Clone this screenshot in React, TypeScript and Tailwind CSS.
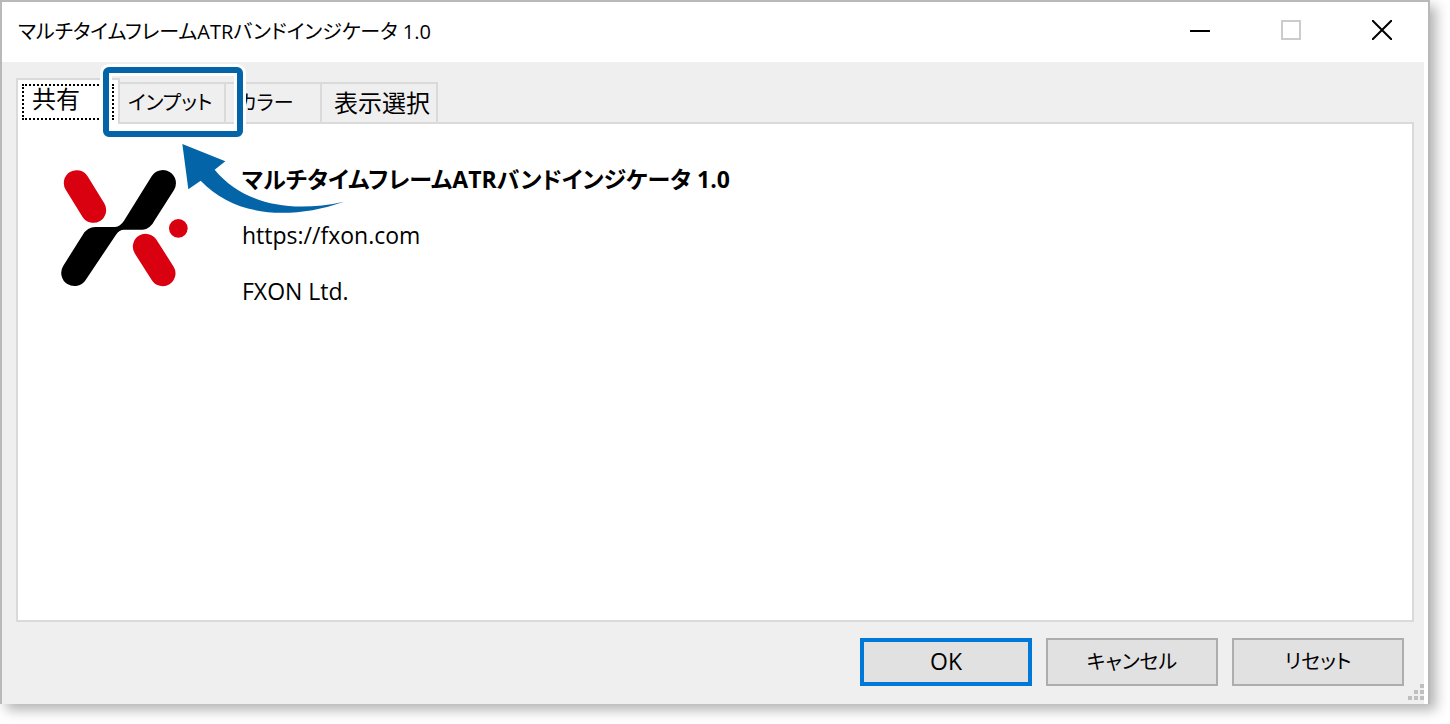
import type { ReactNode } from "react";

const APP_NAME = "マルチタイムフレームATRバンドインジケータ 1.0";

const Logo = () => (
  <svg viewBox="60 114 384 360" className="w-32 h-30 shrink-0" aria-hidden="true">
    <g stroke="#d9000f" strokeWidth="77" strokeLinecap="round">
      <path d="M110 159 L160 240" />
      <path d="M317 350 L368 430" />
    </g>
    <circle cx="415" cy="295" r="28" fill="#d9000f" />
    <path d="M335 139 A39 39 0 0 1 402 180 L346 268 Q330 299 308 299 L252 299 Q238 299 228 314 L137 450 A39 39 0 0 1 70 407 L128 315 Q142 291 166 291 L226 291 Q240 290 252 272 Z" />
  </svg>
);

const Callout = () => (
  <>
    <span className="absolute z-10 -left-[17px] -top-[15px] w-35 h-[70px] rounded-md border-6 border-[#0464a8] shadow-[0_0_0_3px_white,inset_0_0_0_3px_white] pointer-events-none" />
    <svg
      viewBox="426 42 486 207"
      className="absolute z-10 left-[62px] top-[62px] w-[162px] h-[69px] pointer-events-none"
      aria-hidden="true"
    >
      <path
        fill="#0464a8"
        d="M427 42 L556 94 L524 119 C600 210 730 255 912 215 C740 275 580 255 482 152 L445 178 Z"
      />
    </svg>
  </>
);

const TitleBar = () => (
  <header className="flex items-start justify-between h-15 bg-white pl-4 pr-9">
    <h1 className="text-xl leading-15">{APP_NAME}</h1>
    <div className="flex items-center gap-[71px] pt-[18px]">
      <button type="button" aria-label="最小化" className="block">
        <svg viewBox="0 0 20 20" className="size-5" shapeRendering="crispEdges">
          <path d="M0 11 H20" stroke="#000" strokeWidth="2" />
        </svg>
      </button>
      <button type="button" aria-label="最大化" disabled className="block">
        <svg viewBox="0 0 20 20" className="size-5" fill="none">
          <path d="M1 1 H19 V19 H1 Z" stroke="#ccc" strokeWidth="2" />
        </svg>
      </button>
      <button type="button" aria-label="閉じる" className="block">
        <svg viewBox="0 0 20 20" className="size-5">
          <path d="M0 0 L20 20 M20 0 L0 20" stroke="#000" strokeWidth="2" />
        </svg>
      </button>
    </div>
  </header>
);

const Tab = ({ className, children }: { className: string; children: ReactNode }) => (
  <button
    type="button"
    role="tab"
    aria-selected="false"
    className={`h-10 border-t-2 border-r-2 border-[#dadada] bg-[#efefef] text-left leading-9 ${className}`}
  >
    {children}
  </button>
);

const DialogButton = ({ className, children }: { className: string; children: ReactNode }) => (
  <button
    type="button"
    className={`w-43 h-12 bg-[#e1e1e1] leading-8 ${className}`}
  >
    {children}
  </button>
);

const App = () => {
  return (
    <div className="h-screen bg-white pr-5 pb-5 text-black font-['Open_Sans','Noto_Sans_CJK_JP',sans-serif] [font-feature-settings:'palt']">
      <div className="flex flex-col h-full border-2 border-b-0 border-[#b9b9b9] bg-white shadow-[6px_6px_12px_rgba(0,0,0,0.3)]">
        <TitleBar />
        <main className="relative flex flex-col flex-1 mr-1 bg-[#efefef] pt-4 pl-[14px] pr-[10px] pb-[18px]">
          <div role="tablist" className="flex items-end">
            <button
              type="button"
              role="tab"
              aria-selected="true"
              className="relative z-[1] w-26 h-[46px] -mb-[2px] border-2 border-b-0 border-[#dadada] bg-white p-1 text-left text-2xl"
            >
              <span className="block h-9 border-2 border-dotted border-black pl-2 leading-[26px]">
                共有
              </span>
            </button>
            <div className="relative">
              <Tab className="w-[106px] pl-2 text-xl">インプット</Tab>
              <Callout />
            </div>
            <Tab className="w-24 pl-3 text-xl">カラー</Tab>
            <Tab className="w-29 pl-3 text-2xl">表示選択</Tab>
          </div>

          <section
            role="tabpanel"
            className="flex flex-1 items-start gap-[54px] border-2 border-[#dadada] bg-white pl-[42px] pt-[27px]"
          >
            <div className="pt-[17px]">
              <Logo />
            </div>
            <div className="text-[23px] leading-14">
              <h2 className="font-bold">{APP_NAME}</h2>
              <p>
                <a href="https://fxon.com">https://fxon.com</a>
              </p>
              <p>FXON Ltd.</p>
            </div>
          </section>

          <div className="flex justify-end gap-[14px] pt-4 pr-[10px]">
            <DialogButton className="border-4 border-[#0078d7] pb-[2px] text-[23px]">OK</DialogButton>
            <DialogButton className="border-2 border-[#adadad] text-xl">キャンセル</DialogButton>
            <DialogButton className="border-2 border-[#adadad] text-xl">リセット</DialogButton>
          </div>

          <svg
            viewBox="0 0 16 16"
            className="absolute right-0 bottom-1 size-4"
            fill="#bfbfbf"
            aria-hidden="true"
          >
            <path d="M12 0h4v4h-4z M6 6h4v4h-4z M12 6h4v4h-4z M0 12h4v4h-4z M6 12h4v4h-4z M12 12h4v4h-4z" />
          </svg>
        </main>
      </div>
    </div>
  );
};

export default App;
